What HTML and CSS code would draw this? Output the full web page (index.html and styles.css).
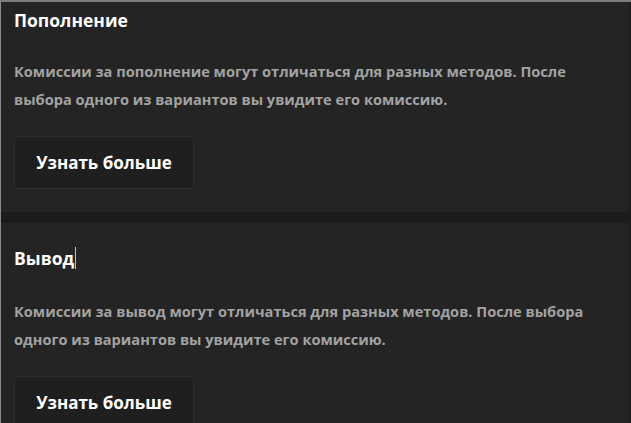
FILE: index.html
```html
<!DOCTYPE html>
<html lang="ru">
<head>
<meta charset="utf-8">
<link rel="stylesheet" href="styles.css">
</head>
<body>
<div class="frame">
  <section class="card card-first">
    <h2 class="title">Пополнение</h2>
    <p class="desc">Комиссии за пополнение могут отличаться для разных методов. После выбора одного из вариантов вы увидите его комиссию.</p>
    <button class="btn">Узнать больше</button>
  </section>
  <section class="card card-second">
    <h2 class="title">Вывод<span class="caret"></span></h2>
    <p class="desc">Комиссии за вывод могут отличаться для разных методов. После выбора одного из вариантов вы увидите его комиссию.</p>
    <button class="btn">Узнать больше</button>
  </section>
</div>
</body>
</html>
```
FILE: styles.css
```css
html, body {
  margin: 0;
  padding: 0;
  height: 100%;
  overflow: hidden;
  background: #1c1c1c;
}
.frame {
  border-top: 2px solid #7b7b7b;
  border-left: 1px solid #8a8a8a;
  height: 100%;
  box-sizing: border-box;
  display: flex;
  flex-direction: column;
  gap: 11px;
  font-family: "Open Sans", "Noto Sans", sans-serif;
}
.card {
  background: #242424;
  padding: 0 13px;
  margin-right: 2px;
  border-radius: 0 0 3px 0;
}
.card-first {
  padding-top: 7px;
  padding-bottom: 23px;
}
.card-second {
  padding-top: 24px;
  flex: 1;
}
.title {
  margin: 0;
  font-size: 17.5px;
  font-weight: 700;
  color: #ffffff;
  line-height: 22px;
  display: flex;
  align-items: center;
}
.caret {
  display: inline-block;
  width: 1px;
  height: 22px;
  background: #bdbdbd;
  margin-left: 1px;
}
.desc {
  margin: 26px 0 0;
  font-size: 14.6px;
  font-weight: 700;
  color: #a2a2a2;
  line-height: 28px;
  max-width: 590px;
}
.card-second .desc {
  margin-top: 28px;
}
.btn {
  display: block;
  margin-top: 23px;
  width: 180px;
  height: 53px;
  background: #1f1f1f;
  border: 1px solid #2e2e2e;
  border-radius: 4px;
  color: #ffffff;
  font-family: "Open Sans", "Noto Sans", sans-serif;
  font-size: 17px;
  font-weight: 700;
  padding: 0;
}
```
